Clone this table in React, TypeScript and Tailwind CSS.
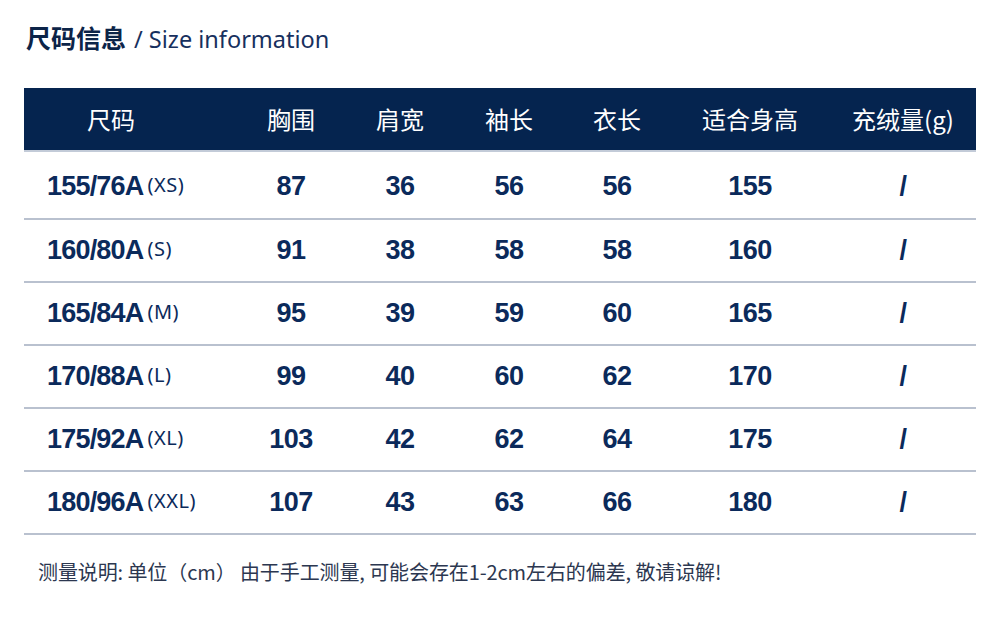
const rows = [
  { size: "155/76A", tag: "(XS)", v: ["87", "36", "56", "56", "155", "/"] },
  { size: "160/80A", tag: "(S)", v: ["91", "38", "58", "58", "160", "/"] },
  { size: "165/84A", tag: "(M)", v: ["95", "39", "59", "60", "165", "/"] },
  { size: "170/88A", tag: "(L)", v: ["99", "40", "60", "62", "170", "/"] },
  { size: "175/92A", tag: "(XL)", v: ["103", "42", "62", "64", "175", "/"] },
  { size: "180/96A", tag: "(XXL)", v: ["107", "43", "63", "66", "180", "/"] },
];

const heads = ["胸围", "肩宽", "袖长", "衣长", "适合身高", "充绒量(g)"];

const cjk = "font-['Noto_Sans_CJK_SC',sans-serif]";
const grid = "grid grid-cols-[212px_110px_108px_110px_106px_160px_146px]";

export default function App() {
  return (
    <div className="w-[1000px] h-[629px] bg-white font-['Liberation_Sans','Noto_Sans_CJK_SC',sans-serif] text-[#0b2a5b]">
      <div className="flex items-baseline pl-[26px] pt-[21px] h-[88px]">
        <span className={`${cjk} font-bold text-[25px] leading-[32px] text-[#0c2448]`}>尺码信息</span>
        <span className="font-['Noto_Sans',sans-serif] text-[23.5px] leading-[32px] ml-[8px] text-[#17305e]">
          / Size information
        </span>
      </div>

      <div className="mx-[24px] w-[952px]">
        <div className={`${grid} h-[62px] items-center bg-[#05244f] text-white text-[24px] ${cjk}`}>
          <div className="pl-[63px]">尺码</div>
          {heads.map((h) => (
            <div key={h} className="text-center">
              {h}
            </div>
          ))}
        </div>
        <div className="h-[2px] bg-[#c3cbd8]" />
        {rows.map((r, i) => (
          <div key={r.size}>
            <div className={`${grid} ${i === 0 ? "h-[66px] pt-[2px]" : "h-[61px]"} items-center`}>
              <div className="pl-[23px] whitespace-nowrap">
                <span className="font-bold text-[27px] tracking-[-0.8px]">{r.size}</span>
                <span className="text-[20px] ml-[4px] relative top-[-3px] font-['Noto_Sans',sans-serif] tracking-[0.5px]">
                  {r.tag}
                </span>
              </div>
              {r.v.map((x, j) => (
                <div key={j} className="text-center font-bold text-[27px] tracking-[-0.5px]">
                  {x}
                </div>
              ))}
            </div>
            <div className="h-[2px] bg-[#b9c1cf]" />
          </div>
        ))}
      </div>

      <div className={`pl-[38px] pt-[22px] text-[20px] text-[#2c3750] ${cjk} whitespace-nowrap tracking-[-0.1px]`}>
        测量说明: 单位（cm） 由于手工测量, 可能会存在1-2cm左右的偏差, 敬请谅解!
      </div>
    </div>
  );
}
